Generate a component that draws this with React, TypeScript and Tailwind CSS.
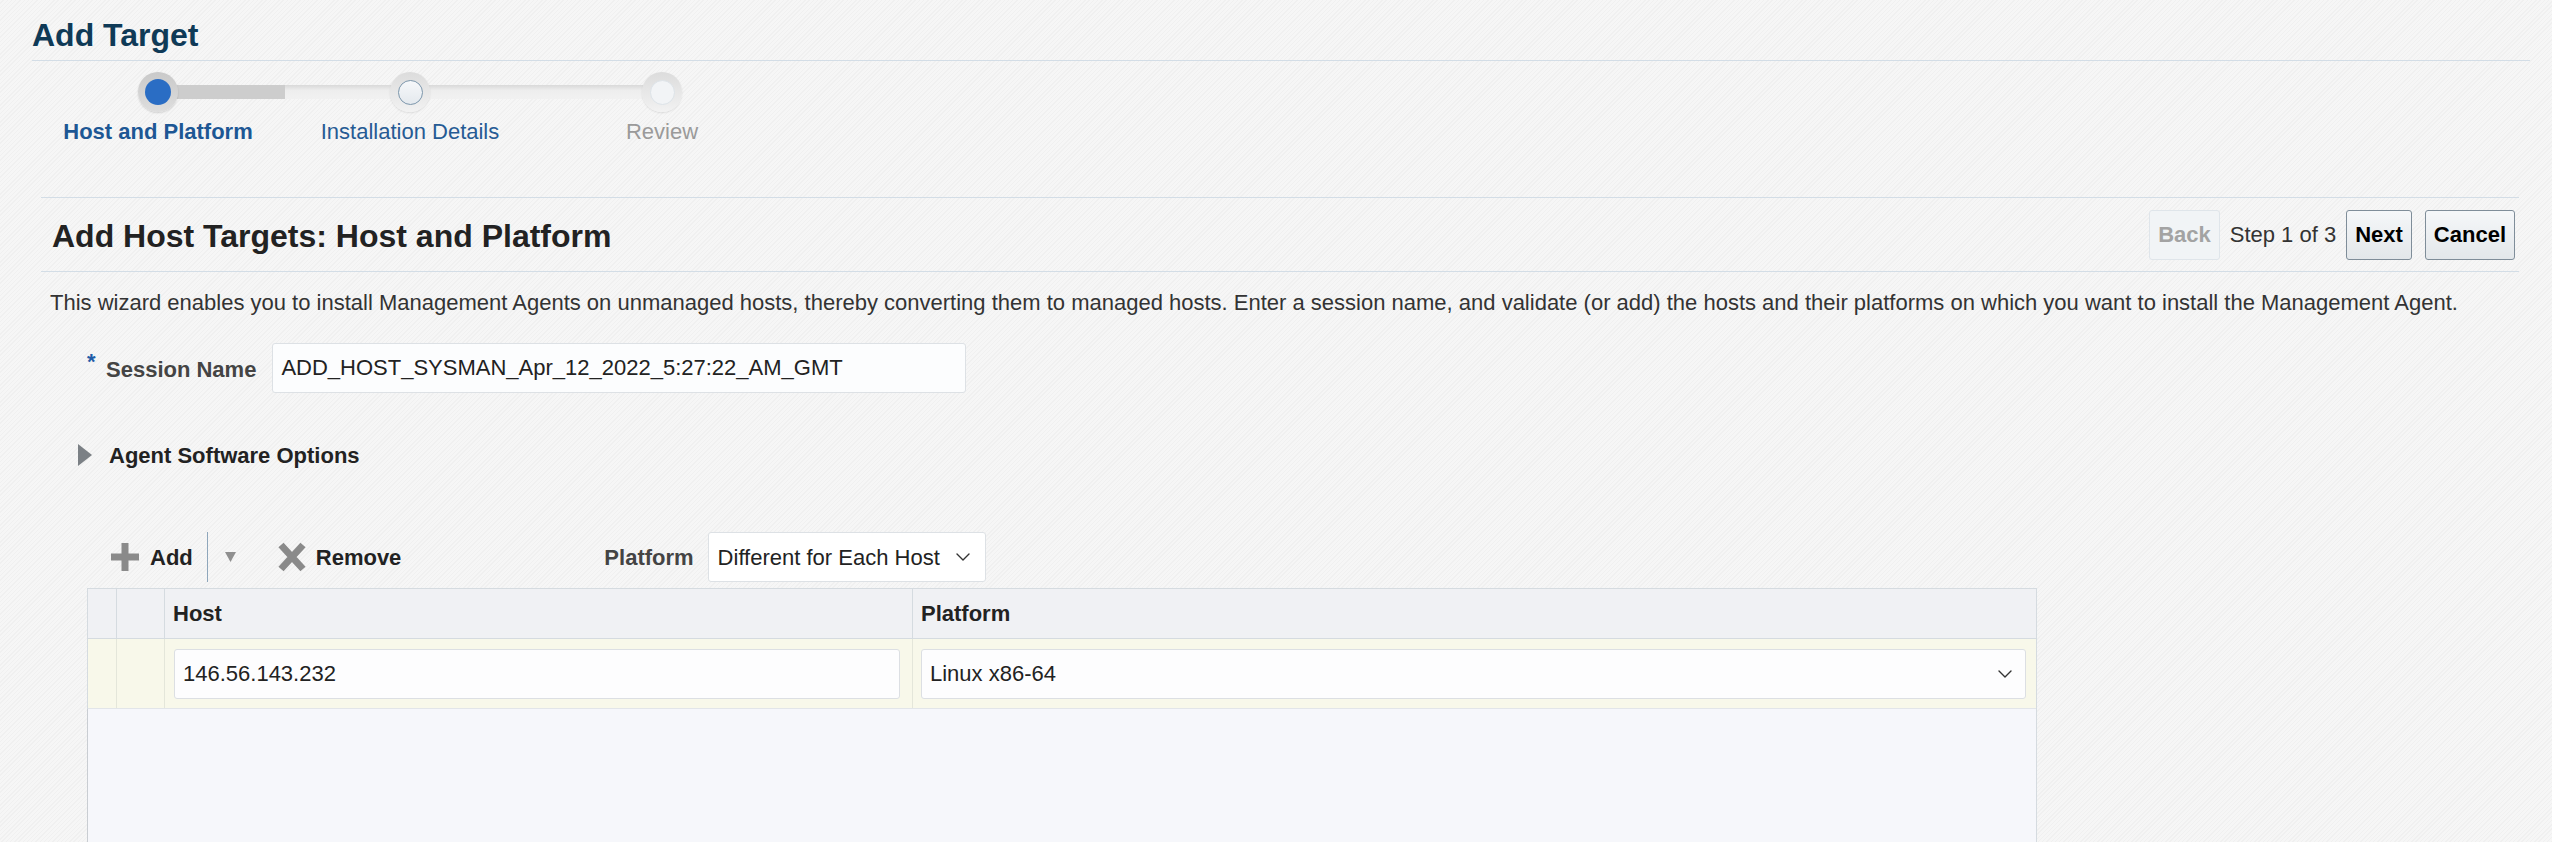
import { ChevronDown } from "lucide-react";

const steps = [
  { label: "Host and Platform", state: "current" },
  { label: "Installation Details", state: "next" },
  { label: "Review", state: "todo" },
];

function Divider() {
  return <div className="h-px bg-[#d3dde6]" />;
}

function StepCircle({ state }: { state: string }) {
  if (state === "current") {
    return (
      <div className="flex h-[40px] w-[40px] items-center justify-center rounded-full bg-[linear-gradient(#c9c9c9,#dedede)] shadow-[0_1px_2px_rgba(0,0,0,0.15)]">
        <div className="h-[26px] w-[26px] rounded-full bg-[#2a6dc4]" />
      </div>
    );
  }
  return (
    <div className="flex h-[40px] w-[40px] items-center justify-center rounded-full bg-[linear-gradient(#dcdcdc,#f2f2f2)] shadow-[0_1px_2px_rgba(0,0,0,0.1)]">
      <div
        className={
          state === "next"
            ? "h-[25px] w-[25px] rounded-full border border-[#7d97ac] bg-[linear-gradient(#f6f8fa,#e4e9ee)]"
            : "h-[25px] w-[25px] rounded-full border border-[#dde3e8] bg-[#f2f4f6]"
        }
      />
    </div>
  );
}

function Button({ children, disabled }: { children: string; disabled?: boolean }) {
  return disabled ? (
    <div className="flex h-[50px] items-center rounded-[3px] border border-[#dfe5ea] bg-[#f1f4f6] px-[8px] text-[22px] font-bold text-[#a3a3a3]">
      {children}
    </div>
  ) : (
    <div className="flex h-[50px] items-center rounded-[3px] border border-[#7f8d99] bg-[linear-gradient(#f5f7f9,#e3e7ea)] px-[8px] text-[22px] font-bold text-black">
      {children}
    </div>
  );
}

function PlusIcon() {
  return (
    <svg width="28" height="28" viewBox="0 0 28 28">
      <rect x="10.5" y="0" width="7" height="28" fill="#8a8a8a" />
      <rect x="0" y="10.5" width="28" height="7" fill="#8a8a8a" />
    </svg>
  );
}

function RemoveIcon() {
  return (
    <svg width="30" height="30" viewBox="0 0 30 30">
      <path d="M4 3 L26 27 M26 3 L4 27" stroke="#8a8a8a" strokeWidth="7" strokeLinecap="butt" />
    </svg>
  );
}

export default function App() {
  return (
    <div className="min-h-screen bg-[repeating-linear-gradient(135deg,#f6f6f6_0px,#f6f6f6_2px,#f0f0f0_2px,#f0f0f0_3px)] font-['Liberation_Sans',Arial,sans-serif] text-[#333]">
      {/* Train header */}
      <div className="pb-[52px] pl-[32px] pr-[22px] pt-[19px]">
        <h1 className="text-[32px] font-bold leading-[32px] text-[#0f3a57]">Add Target</h1>
        <div className="mt-[9px]">
          <Divider />
        </div>
        <div className="relative flex pt-[11px]">
          <div className="absolute left-[126px] top-[24px] flex h-[14px] w-[504px]">
            <div className="h-full w-[127px] bg-[#cdcdcd]" />
            <div className="h-full flex-1 bg-[linear-gradient(#d9d9d9,#eeeeee_40%,#f1f1f1)]" />
          </div>
          {steps.map((s) => (
            <div key={s.label} className="relative flex w-[252px] flex-col items-center">
              <StepCircle state={s.state} />
              <div
                className={
                  s.state === "current"
                    ? "mt-[6px] text-[22px] font-bold leading-[27px] text-[#1d5794]"
                    : s.state === "next"
                      ? "mt-[6px] text-[22px] leading-[27px] text-[#265b94]"
                      : "mt-[6px] text-[22px] leading-[27px] text-[#9a9a9a]"
                }
              >
                {s.label}
              </div>
            </div>
          ))}
        </div>
      </div>

      {/* Page content */}
      <div className="pl-[41px] pr-[33px]">
        <Divider />
        <div className="flex h-[73px] items-center justify-between">
          <h2 className="ml-[11px] mt-[2px] text-[32px] font-bold leading-[36px] text-[#222]">
            Add Host Targets: Host and Platform
          </h2>
          <div className="mr-[4px] flex items-center">
            <Button disabled>Back</Button>
            <span className="mx-[10px] text-[22px] text-[#333]">Step 1 of 3</span>
            <Button>Next</Button>
            <div className="ml-[13px]">
              <Button>Cancel</Button>
            </div>
          </div>
        </div>
        <Divider />

        <p className="ml-[9px] mt-[18px] whitespace-nowrap text-[22px] leading-[26px] text-[#333]">
          This wizard enables you to install Management Agents on unmanaged hosts, thereby converting them to managed
          hosts. Enter a session name, and validate (or add) the hosts and their platforms on which you want to install
          the Management Agent.
        </p>

        <div className="ml-[46px] mt-[27px] flex h-[50px] items-center">
          <span className="w-[19px] pb-[12px] text-[22px] font-bold leading-[22px] text-[#1f5ca8]">*</span>
          <label className="mt-[3px] text-[22px] font-bold text-[#444]">Session Name</label>
          <input
            readOnly
            defaultValue="ADD_HOST_SYSMAN_Apr_12_2022_5:27:22_AM_GMT"
            className="ml-[16px] h-[50px] w-[694px] rounded-[3px] border border-[#dde1e5] bg-[#fcfdfe] px-[8px] text-[22px] text-[#222] outline-none"
          />
        </div>

        <div className="ml-[37px] mt-[49px] flex h-[26px] items-center">
          <svg width="14" height="22" viewBox="0 0 14 22">
            <path d="M0 0 L14 11 L0 22 Z" fill="#7b8085" />
          </svg>
          <span className="ml-[17px] text-[22px] font-bold text-[#222]">Agent Software Options</span>
        </div>

        {/* Toolbar */}
        <div className="ml-[70px] mt-[64px] flex h-[50px] items-center">
          <PlusIcon />
          <span className="ml-[11px] text-[22px] font-bold text-[#222]">Add</span>
          <div className="ml-[14px] h-[50px] w-px bg-[#8ea6bb]" />
          <svg className="ml-[17px]" width="11" height="10" viewBox="0 0 11 10">
            <path d="M0 0 L11 0 L5.5 10 Z" fill="#8f8f8f" />
          </svg>
          <div className="ml-[41px]">
            <RemoveIcon />
          </div>
          <span className="ml-[9px] text-[22px] font-bold text-[#222]">Remove</span>
          <span className="ml-[203px] text-[22px] font-bold text-[#444]">Platform</span>
          <div className="ml-[14px] flex h-[50px] w-[278px] items-center justify-between rounded-[3px] border border-[#dde1e5] bg-white pl-[9px] pr-[10px] text-[22px] text-[#222]">
            <span>Different for Each Host</span>
            <ChevronDown size={24} strokeWidth={1.4} color="#333" />
          </div>
        </div>

        {/* Hosts table */}
        <div className="ml-[46px] mt-[6px] w-[1950px] border-x border-t border-[#d5dbe0]">
          <div className="flex h-[50px] border-b border-[#d5dbe0] bg-[#f0f1f4] text-[22px] font-bold text-[#222]">
            <div className="w-[29px] border-r border-[#d5dbe0]" />
            <div className="w-[48px] border-r border-[#d5dbe0]" />
            <div className="flex w-[748px] items-center border-r border-[#d5dbe0] pl-[8px]">Host</div>
            <div className="flex flex-1 items-center pl-[8px]">Platform</div>
          </div>
          <div className="flex h-[70px] border-b border-[#e2e5e9] bg-[#f8f8ea]">
            <div className="w-[29px] border-r border-[#e4e6da]" />
            <div className="w-[48px] border-r border-[#e4e6da]" />
            <div className="flex w-[748px] items-center border-r border-[#e4e6da] pl-[9px]">
              <input
                readOnly
                defaultValue="146.56.143.232"
                className="h-[50px] w-[726px] rounded-[3px] border border-[#dcdfe3] bg-[#fdfdfe] px-[8px] text-[22px] text-[#222] outline-none"
              />
            </div>
            <div className="flex flex-1 items-center pl-[8px]">
              <div className="flex h-[50px] w-[1105px] items-center justify-between rounded-[3px] border border-[#dcdfe3] bg-[#fdfdfe] pl-[8px] pr-[8px] text-[22px] text-[#222]">
                <span>Linux x86-64</span>
                <ChevronDown size={24} strokeWidth={1.4} color="#333" />
              </div>
            </div>
          </div>
          <div className="h-[134px] border-l border-[#c9cdd2] bg-[#f6f7fb] -ml-px" />
        </div>
      </div>
    </div>
  );
}
